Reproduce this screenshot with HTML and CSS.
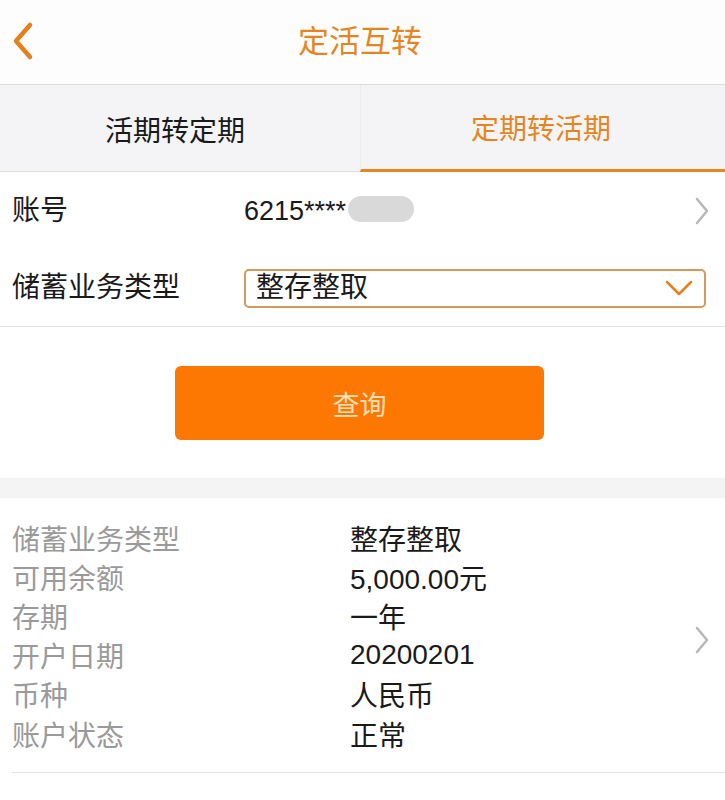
FILE: index.html
```html
<!DOCTYPE html>
<html lang="zh">
<head>
<meta charset="utf-8">
<link rel="stylesheet" href="styles.css">
</head>
<body>
<div class="page">
  <header class="nav">
    <svg class="back" viewBox="0 0 24 40" width="24" height="40"><path d="M19 4 L5 20 L19 36" fill="none" stroke="#e5801f" stroke-width="4.5" stroke-linecap="round" stroke-linejoin="round"/></svg>
    <h1 class="title">定活互转</h1>
  </header>
  <nav class="tabs">
    <div class="tab">活期转定期</div>
    <div class="tab active">定期转活期</div>
  </nav>
  <section class="form">
    <div class="row">
      <span class="label">账号</span>
      <span class="value acct">6215****<span class="mask"></span></span>
      <svg class="chev" viewBox="0 0 16 30" width="16" height="30"><path d="M3 3 L13 15 L3 27" fill="none" stroke="#b8b8b8" stroke-width="2.5" stroke-linecap="round" stroke-linejoin="round"/></svg>
    </div>
    <div class="row">
      <span class="label">储蓄业务类型</span>
      <div class="select">
        <span>整存整取</span>
        <svg viewBox="0 0 28 16" width="28" height="16"><path d="M2 2 L14 14 L26 2" fill="none" stroke="#e5801f" stroke-width="2.5" stroke-linecap="round" stroke-linejoin="round"/></svg>
      </div>
    </div>
  </section>
  <section class="action">
    <button class="btn">查询</button>
  </section>
  <div class="gap"></div>
  <section class="detail">
    <div class="list">
      <div class="item"><span class="k">储蓄业务类型</span><span class="v">整存整取</span></div>
      <div class="item"><span class="k">可用余额</span><span class="v">5,000.00元</span></div>
      <div class="item"><span class="k">存期</span><span class="v">一年</span></div>
      <div class="item"><span class="k">开户日期</span><span class="v">20200201</span></div>
      <div class="item"><span class="k">币种</span><span class="v">人民币</span></div>
      <div class="item"><span class="k">账户状态</span><span class="v">正常</span></div>
    </div>
    <svg class="chev dchev" viewBox="0 0 16 30" width="16" height="30"><path d="M3 3 L13 15 L3 27" fill="none" stroke="#b8b8b8" stroke-width="2.5" stroke-linecap="round" stroke-linejoin="round"/></svg>
  </section>
</div>
</body>
</html>
```

FILE: styles.css
```css
* { box-sizing: border-box; margin: 0; padding: 0; }
html, body { background: #fff; }
body {
  font-family: "Liberation Sans", "Noto Sans CJK SC", sans-serif;
  color: #1a1a1a;
}
.page { width: 725px; }

.nav {
  height: 85px;
  position: relative;
  display: flex;
  align-items: center;
  justify-content: center;
  border-bottom: 1px solid #dcdcdc;
  background: #fdfdfd;
}
.back { position: absolute; left: 11px; top: 21px; }
.title {
  font-size: 31px;
  font-weight: 400;
  color: #e5851f;
  line-height: 40px;
  margin-left: -5px;
}

.tabs {
  display: flex;
  height: 87px;
  background: #f4f4f6;
}
.tab {
  width: 360px;
  flex: none;
  display: flex;
  align-items: center;
  justify-content: center;
  font-size: 28px;
  color: #1a1a1a;
  border-bottom: 1px solid #dddddd;
  padding-top: 2px;
}
.tab:first-child { padding-right: 10px; }
.tab.active {
  width: 365px;
  color: #e5851f;
  border-bottom: 3px solid #e5851f;
  border-left: 1px solid #ececec;
  padding-top: 0;
  padding-right: 4px;
}

.form { border-bottom: 1px solid #e4e4e4; }
.row {
  display: flex;
  align-items: center;
  padding-left: 12px;
  padding-right: 15px;
}
.row:first-child { height: 78px; }
.row:last-child { height: 76px; }
.label {
  width: 232px;
  font-size: 28px;
  line-height: 36px;
  color: #1a1a1a;
}
.value.acct {
  font-size: 27px;
  line-height: 36px;
  display: flex;
  align-items: center;
  flex: 1;
}
.mask {
  display: inline-block;
  width: 66px;
  height: 26px;
  border-radius: 13px;
  background: #d9d9d9;
  margin-left: 2px;
  margin-top: -4px;
}

.select {
  flex: 1;
  height: 39px;
  margin-right: 4px;
  border: 2px solid #d49a5c;
  border-radius: 5px;
  display: flex;
  align-items: center;
  justify-content: space-between;
  padding: 0 11px 0 10px;
  font-size: 28px;
  line-height: 36px;
  color: #1a1a1a;
}

.action {
  height: 151px;
  display: flex;
  justify-content: center;
  padding-top: 39px;
}
.btn {
  width: 369px;
  height: 74px;
  border: none;
  border-radius: 6px;
  background: #fd7703;
  color: #ffe0b6;
  font-family: "Noto Sans CJK SC", sans-serif;
  font-size: 27px;
  margin-right: 6px;
}

.gap { height: 20px; background: #f4f4f4; }

.detail {
  display: flex;
  align-items: center;
  padding: 20px 15px 19px 0;
  border-bottom: 1px solid #e4e4e4;
  margin-left: 12px;
}
.list { flex: 1; }
.item {
  display: flex;
  height: 39.2px;
  align-items: center;
  font-size: 28px;
}
.k { width: 338px; color: #9a9a9a; }
.v { color: #1a1a1a; }
.dchev { margin-top: 8px; }
```
